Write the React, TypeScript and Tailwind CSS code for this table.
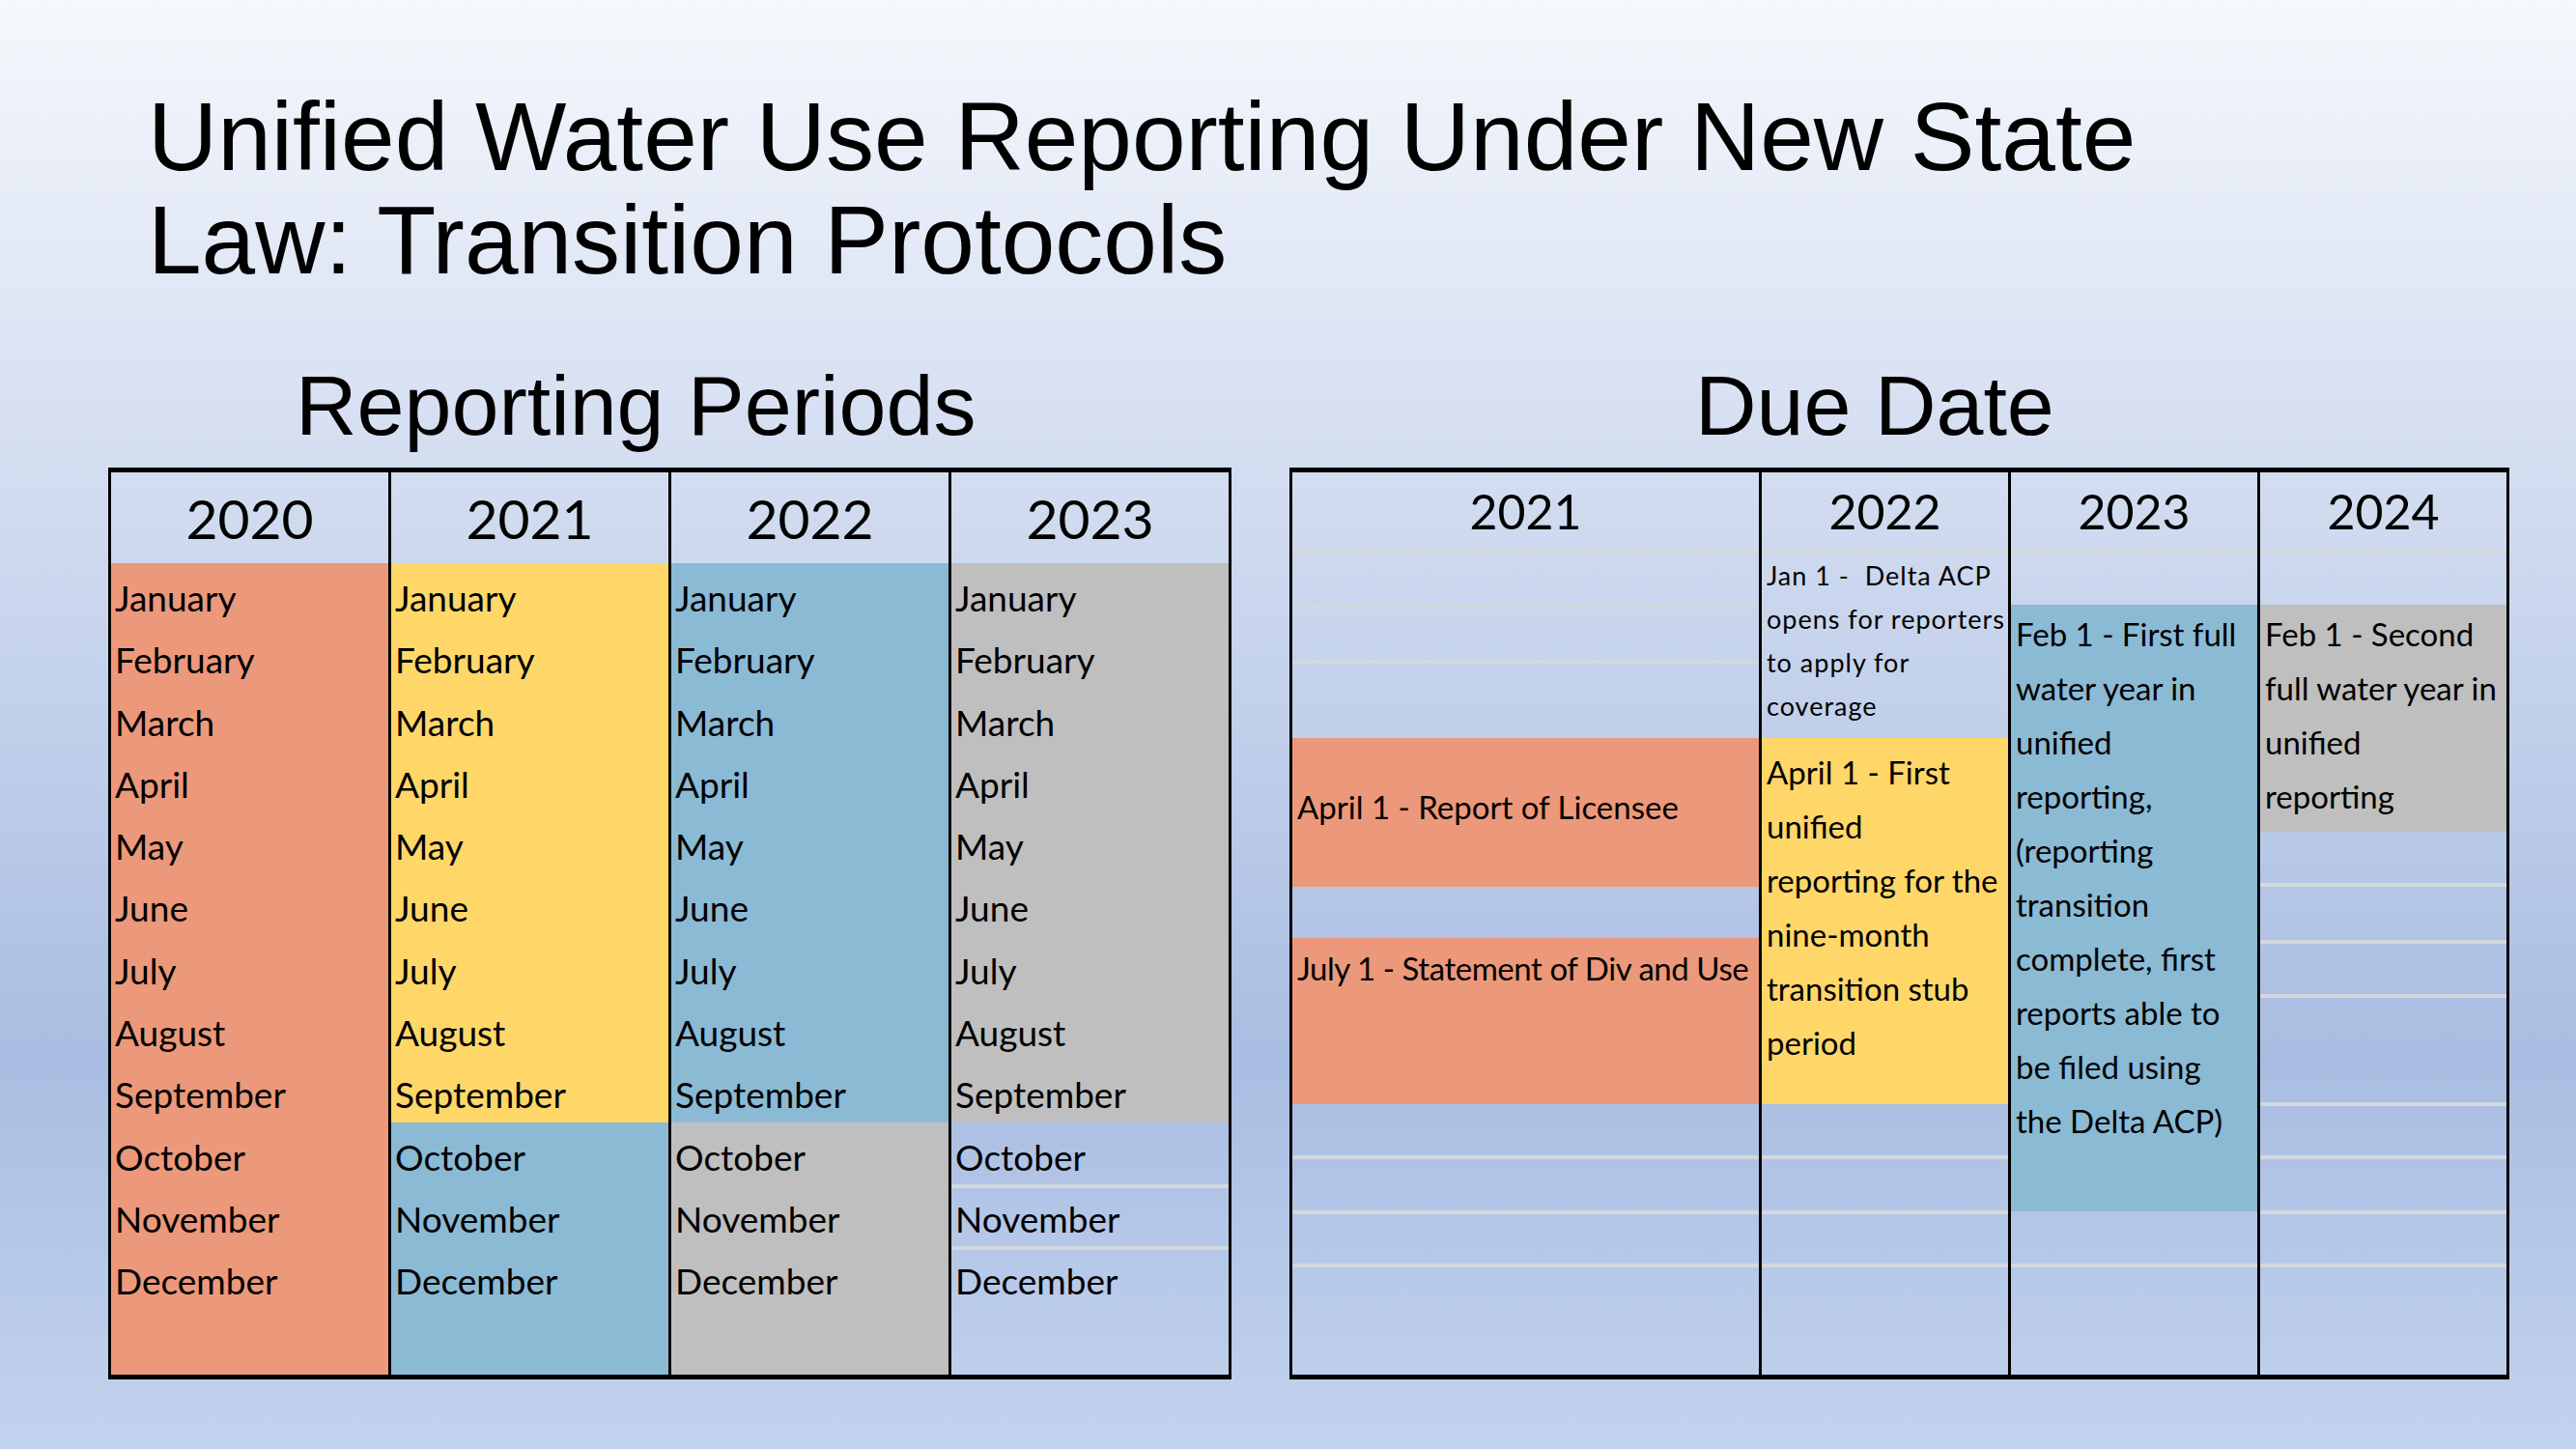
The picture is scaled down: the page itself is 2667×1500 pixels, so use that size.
import clsx from 'clsx';

const months = [
    'January', 'February', 'March', 'April', 'May', 'June',
    'July', 'August', 'September', 'October', 'November', 'December',
];

const SEP = 'border-t-4 border-[#d3d8df]';

function MonthRow({ name, sep }: { name: string; sep?: boolean }) {
    return (
        <div className={clsx('h-[64.3px] pl-[4px] whitespace-nowrap', sep ? `${SEP} pt-[10px]` : 'pt-[14px]')}>
            {name}
        </div>
    );
}

function YearHead({ year, tall }: { year: string; tall?: boolean }) {
    return (
        <div
            className={clsx(
                'flex items-center justify-center leading-none',
                tall ? 'h-[94px] text-[57px]' : 'h-[80px] text-[50px]'
            )}
        >
            {year}
        </div>
    );
}

type Seg = { cls: string; lines?: string[]; small?: boolean };

const dueColumns: { year: string; width: string; segs: Seg[] }[] = [
    {
        year: '2021',
        width: 'w-[486px]',
        segs: [
            { cls: `h-[57px] ${SEP}` },
            { cls: `h-[57px] ${SEP}` },
            { cls: `h-[81px] ${SEP}` },
            { cls: 'h-[154px] bg-[#ec987a] pt-[43px]', lines: ['April 1 - Report of Licensee'] },
            { cls: 'h-[53px]' },
            { cls: 'h-[172px] bg-[#ec987a] pt-[3px] tracking-[-0.45px]', lines: ['July 1 - Statement of Div and Use'] },
            { cls: 'h-[53px]' },
            { cls: `h-[57px] ${SEP}` },
            { cls: `h-[55px] ${SEP}` },
            { cls: `flex-1 ${SEP}` },
        ],
    },
    {
        year: '2022',
        width: 'w-[258px]',
        segs: [
            {
                cls: `h-[195px] ${SEP}`,
                small: true,
                lines: ['Jan 1 -  Delta ACP', 'opens for reporters', 'to apply for', 'coverage'],
            },
            {
                cls: 'h-[379px] bg-[#ffd768] pt-[7px]',
                lines: ['April 1 - First', 'unified', 'reporting for the', 'nine-month', 'transition stub', 'period'],
            },
            { cls: 'h-[53px]' },
            { cls: `h-[57px] ${SEP}` },
            { cls: `h-[55px] ${SEP}` },
            { cls: `flex-1 ${SEP}` },
        ],
    },
    {
        year: '2023',
        width: 'w-[258px]',
        segs: [
            { cls: `h-[57px] ${SEP}` },
            {
                cls: 'h-[628px] bg-[#8bbad5] pt-[2px]',
                lines: [
                    'Feb 1 - First full', 'water year in', 'unified', 'reporting,', '(reporting',
                    'transition', 'complete, first', 'reports able to', 'be filed using', 'the Delta ACP)',
                ],
            },
            { cls: 'h-[54px]' },
            { cls: `flex-1 ${SEP}` },
        ],
    },
    {
        year: '2024',
        width: 'w-[258px]',
        segs: [
            { cls: `h-[57px] ${SEP}` },
            {
                cls: 'h-[235px] bg-[#bfbfbf] pt-[2px]',
                lines: ['Feb 1 - Second', 'full water year in', 'unified', 'reporting'],
            },
            { cls: 'h-[53px]' },
            { cls: `h-[59px] ${SEP}` },
            { cls: `h-[56px] ${SEP}` },
            { cls: `h-[112px] ${SEP}` },
            { cls: `h-[55px] ${SEP}` },
            { cls: `h-[57px] ${SEP}` },
            { cls: `h-[55px] ${SEP}` },
            { cls: `flex-1 ${SEP}` },
        ],
    },
];

function ReportingTable() {
    return (
        <div className="flex h-[944px] border-t-[5px] border-b-[5px] border-l-[3px] border-black font-['Lato','Carlito',sans-serif] text-[37px] leading-[44px] text-black">
            {/* 2020 */}
            <div className="w-[290px] flex flex-col border-r-[3px] border-black">
                <YearHead year="2020" tall />
                <div className="flex-1 bg-[#ec987a]">
                    {months.map((m) => <MonthRow key={m} name={m} />)}
                </div>
            </div>
            {/* 2021 */}
            <div className="w-[290px] flex flex-col border-r-[3px] border-black">
                <YearHead year="2021" tall />
                <div className="bg-[#ffd768]">
                    {months.slice(0, 9).map((m) => <MonthRow key={m} name={m} />)}
                </div>
                <div className="flex-1 bg-[#8bbad5]">
                    {months.slice(9).map((m) => <MonthRow key={m} name={m} />)}
                </div>
            </div>
            {/* 2022 */}
            <div className="w-[290px] flex flex-col border-r-[3px] border-black">
                <YearHead year="2022" tall />
                <div className="bg-[#8bbad5]">
                    {months.slice(0, 9).map((m) => <MonthRow key={m} name={m} />)}
                </div>
                <div className="flex-1 bg-[#bfbfbf]">
                    {months.slice(9).map((m) => <MonthRow key={m} name={m} />)}
                </div>
            </div>
            {/* 2023 */}
            <div className="w-[290px] flex flex-col border-r-[3px] border-black">
                <YearHead year="2023" tall />
                <div className="bg-[#bfbfbf]">
                    {months.slice(0, 9).map((m) => <MonthRow key={m} name={m} />)}
                </div>
                <div className="flex-1 flex flex-col">
                    <MonthRow name="October" />
                    <MonthRow name="November" sep />
                    <div className={`flex-1 pl-[4px] pt-[10px] ${SEP}`}>December</div>
                </div>
            </div>
        </div>
    );
}

function DueTable() {
    return (
        <div className="flex h-[944px] border-t-[5px] border-b-[5px] border-l-[3px] border-black font-['Lato','Carlito',sans-serif] text-black">
            {dueColumns.map((col) => (
                <div key={col.year} className={clsx(col.width, 'flex flex-col border-r-[3px] border-black')}>
                    <YearHead year={col.year} />
                    {col.segs.map((s, i) => (
                        <div
                            key={i}
                            className={clsx(
                                s.cls,
                                'pl-[5px] whitespace-pre',
                                s.small ? 'text-[27px] leading-[45px] tracking-[1px]' : 'text-[33px] leading-[56px]'
                            )}
                        >
                            {s.lines?.map((l) => <div key={l}>{l}</div>)}
                        </div>
                    ))}
                </div>
            ))}
        </div>
    );
}

export default function App() {
    return (
        <div className="w-[2667px] h-[1500px] overflow-hidden bg-[linear-gradient(180deg,#f5f8fc_0%,#e0e7f5_20%,#a9bde2_73%,#c3d3ee_100%)]">
            <h1 className="pl-[153px] pt-[88px] font-['Liberation_Sans',Arial,sans-serif] text-[100px] leading-[107px] text-black">
                Unified Water Use Reporting Under New State
                <br />
                Law: Transition Protocols
            </h1>

            <div className="mt-[74px] flex gap-[60px] pl-[112px]">
                <section className="w-[1163px] flex flex-col">
                    <h2 className="pl-[194px] font-['Liberation_Sans',Arial,sans-serif] text-[88px] leading-[88px] text-black">
                        Reporting Periods
                    </h2>
                    <div className="mt-[20px]">
                        <ReportingTable />
                    </div>
                </section>
                <section className="w-[1263px] flex flex-col">
                    <h2 className="pl-[420px] font-['Liberation_Sans',Arial,sans-serif] text-[88px] leading-[88px] text-black">
                        Due Date
                    </h2>
                    <div className="mt-[20px]">
                        <DueTable />
                    </div>
                </section>
            </div>
        </div>
    );
}
